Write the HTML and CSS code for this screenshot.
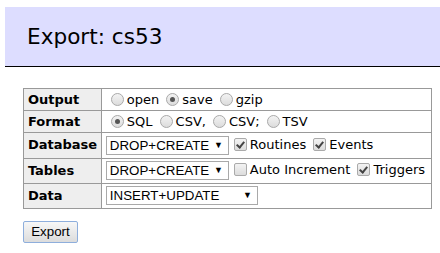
FILE: index.html
```html
<!DOCTYPE html>
<html lang="en">
<head>
    <meta charset="UTF-8">
    <title>Export: cs53</title>
    <link rel="stylesheet" href="styles.css">
</head>
<body>
    <div class="content">
        <h2>Export: cs53</h2>

        <form>
            <table class="options">
                <tr>
                    <th>Output</th>
                    <td><label><input type="radio" name="output" value="open">open</label><label><input type="radio" name="output" value="save" checked>save</label><label><input type="radio" name="output" value="gz">gzip</label></td>
                </tr>
                <tr>
                    <th>Format</th>
                    <td><label><input type="radio" name="format" value="sql" checked>SQL</label><label><input type="radio" name="format" value="csv">CSV,</label><label><input type="radio" name="format" value="csv;">CSV;</label><label><input type="radio" name="format" value="tsv">TSV</label></td>
                </tr>
                <tr>
                    <th>Database</th>
                    <td><span class="sel sel-short"><select name="db_style"><option>DROP+CREATE</option></select></span><label><input type="checkbox" name="routines" checked>Routines</label><label><input type="checkbox" name="events" checked>Events</label></td>
                </tr>
                <tr>
                    <th>Tables</th>
                    <td><span class="sel sel-short"><select name="table_style"><option>DROP+CREATE</option></select></span><label><input type="checkbox" name="auto_increment">Auto Increment</label><label><input type="checkbox" name="triggers" checked>Triggers</label></td>
                </tr>
                <tr>
                    <th>Data</th>
                    <td><span class="sel sel-long"><select name="data_style"><option>INSERT+UPDATE</option></select></span></td>
                </tr>
            </table>

            <p class="actions"><button type="button">Export</button></p>
        </form>
    </div>
</body>
</html>
```

FILE: styles.css
```css
body {
    margin: 0;
    color: #000;
    background: #fff;
    font: 14.4px/1.25 "DejaVu Sans", Verdana, sans-serif;
}
.content {
    padding: 7px 0 0 23px;
}
h2 {
    font-size: 21.6px;
    font-weight: normal;
    line-height: 27px;
    margin: 0 0 21px -18px;
    padding: 16px 22px;
    background: #ddf;
    border-bottom: 1px solid #000;
}
.options {
    border-collapse: collapse;
    font-size: 13px;
    width: 405px;
    white-space: nowrap;
}
.options th,
.options td {
    border: 1px solid #999;
    padding: 2.6px 3.9px;
    line-height: 16px;
}
.options th {
    background: #eee;
    text-align: left;
    width: 69px;
}
label {
    margin-right: 2px;
}
input[type="radio"],
input[type="checkbox"] {
    appearance: none;
    -webkit-appearance: none;
    position: relative;
    width: 13px;
    height: 13px;
    margin: 0 3px 0 5px;
    vertical-align: -2px;
    border: 1px solid #aaa;
    background: linear-gradient(#f3f3f3, #dcdcdc);
    box-sizing: border-box;
}
input[type="radio"] {
    border-radius: 50%;
}
input[type="radio"]:checked::after {
    content: "";
    position: absolute;
    left: 3px;
    top: 3px;
    width: 5px;
    height: 5px;
    border-radius: 50%;
    background: #555;
}
input[type="checkbox"] {
    border-radius: 2px;
}
input[type="checkbox"]:checked::after {
    content: "";
    position: absolute;
    left: 3px;
    top: 1px;
    width: 3px;
    height: 6px;
    border: solid #444;
    border-width: 0 2px 2px 0;
    transform: rotate(40deg);
}
.sel {
    position: relative;
    display: inline-block;
    vertical-align: middle;
}
.sel::after {
    content: "▼";
    position: absolute;
    right: 6px;
    top: 4px;
    font: 9px "Liberation Sans", Arial, sans-serif;
    pointer-events: none;
}
select {
    appearance: none;
    -webkit-appearance: none;
    display: block;
    height: 19px;
    padding: 0 3px;
    border: 1px solid #a9a9a9;
    border-radius: 0;
    background: #fff;
    color: #000;
    font: 13.33px/17px "Liberation Sans", Arial, sans-serif;
}
.sel-short select {
    width: 123px;
}
.sel-long select {
    width: 152px;
}
.actions {
    margin: 12px 0 0;
}
button {
    height: 22px;
    width: 55px;
    padding: 0;
    border: 1px solid #8eaedc;
    border-radius: 2px;
    background: linear-gradient(#f7f7f7, #dcdcdc);
    font: 13.33px "Liberation Sans", Arial, sans-serif;
    color: #000;
}
```
